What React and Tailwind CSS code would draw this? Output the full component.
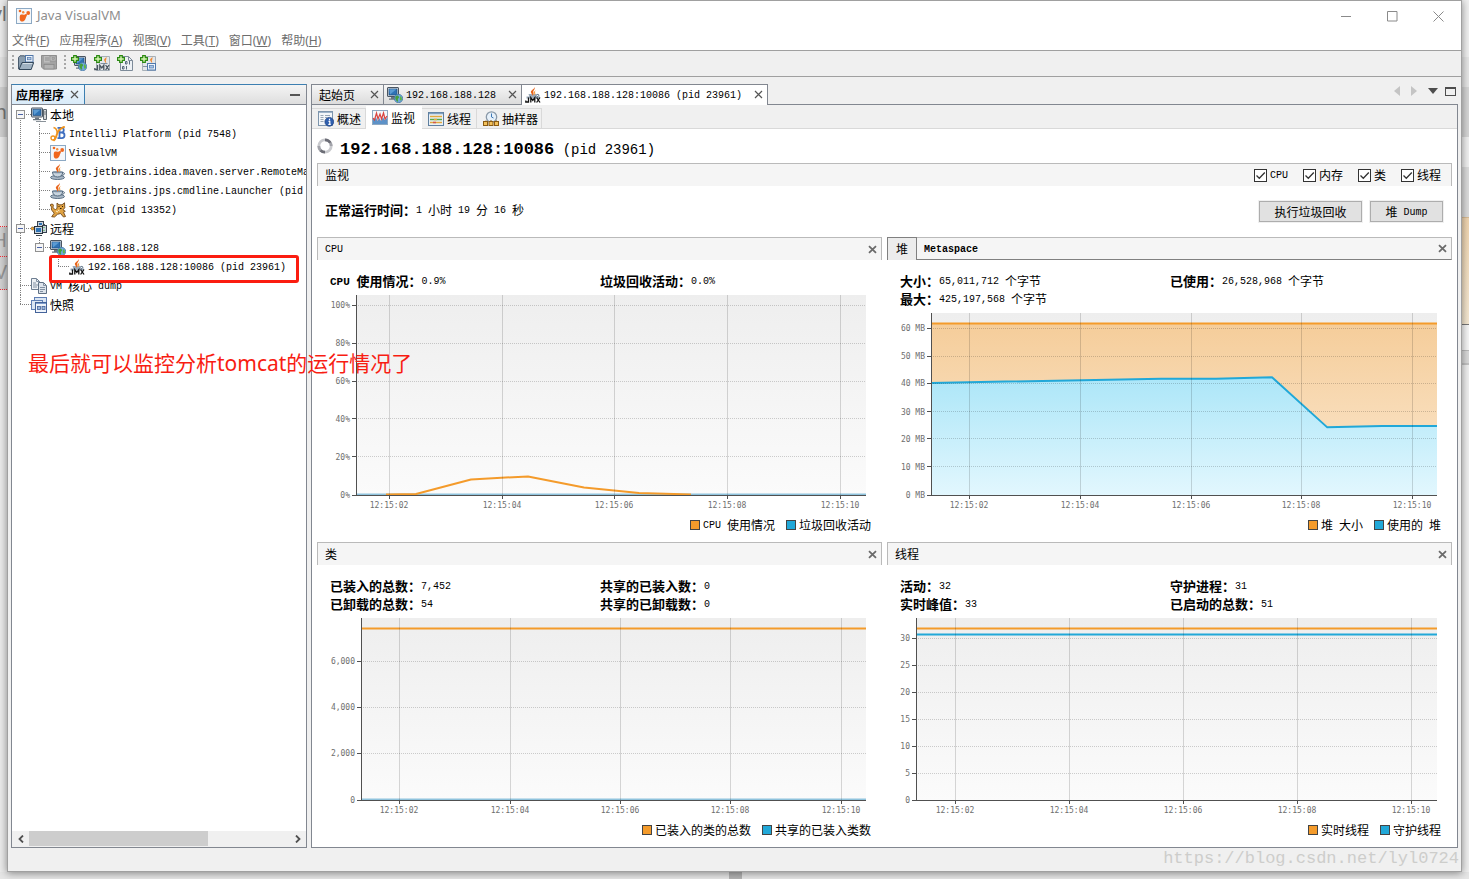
import React from "react";

const MONO = "font-['Liberation_Mono','Noto_Sans_CJK_SC',monospace]";
const SANS = "font-['Noto_Sans','Noto_Sans_CJK_SC',sans-serif]";

/* Latin runs use a smaller monospace size than the Chinese glyphs around them. */
function Mixed({ children, bold = false }) {
  const parts = String(children).match(/[\x00-\x7f]+|[^\x00-\x7f]+/g) || [];
  return (
    <span className={bold ? "inline-flex items-center align-middle leading-[14px] whitespace-pre font-bold" : "inline-flex items-center align-middle leading-[14px] whitespace-pre"}>
      {parts.map((p, i) =>
        p.charCodeAt(0) < 128 ? (
          <span key={i} className={bold ? "pt-[2px] text-[11px] leading-[12px]" : "pt-[2px] text-[10px] leading-[12px]"}>{p}</span>
        ) : (
          <span key={i} className={bold ? "font-['Noto_Sans_CJK_SC',sans-serif] text-[13px]" : "font-['Noto_Sans_CJK_SC',sans-serif] text-[12px]"}>{p}</span>
        )
      )}
    </span>
  );
}

/* ---------- icons ---------- */

function Svg({ children, size = "size-4" }) {
  return (
    <svg viewBox="0 0 16 16" className={`${size} shrink-0`} aria-hidden="true">
      {children}
    </svg>
  );
}

const VisualVmIcon = () => (
  <Svg>
    <rect x="0.5" y="0.5" width="15" height="15" fill="#f4f7fa" stroke="#8ca9c4" />
    <path d="M4.200 7c1.800-1 3 .2 4.800-.6 2.200-1.200 2.400.4 1.500 1.900-.9 1.500-.8 3.400-2.600 4.700-1.800 1.200-4 .4-4.100-1.500 0-1.300-.3-3.600.4-4.500z" fill="#f0671e" />
    <circle cx="4" cy="3" r="1.300" fill="#f0671e" />
    <circle cx="7.200" cy="4.300" r="1.200" fill="#f58a3c" />
    <circle cx="12.200" cy="5" r="1.900" fill="#f0671e" />
  </Svg>
);

const Monitor = ({ x = 0, y = 0 }) => (
  <g transform={`translate(${x} ${y})`}>
    <rect x="0.500" y="0.500" width="11" height="9" rx="0.500" fill="#c9d3dd" stroke="#4a5561" />
    <rect x="2" y="2" width="8" height="6" fill="#2f73b5" stroke="#1d4676" strokeWidth="0.600" />
    <path d="M2.300 2.300h7L3 7.500z" fill="#5b9bd3" />
    <path d="M4 10h4v1.500H4zM2 11.500h8v1.200H2z" fill="#6a7580" />
  </g>
);

const LocalIcon = () => (
  <Svg>
    <path d="M12.500 2.500h3v10h-3z" fill="#d6d9dc" stroke="#5c6670" />
    <path d="M13 5h2M13 7h2" stroke="#70787f" />
    <Monitor x={0} y={0.500} />
    <path d="M5 14.500h10" stroke="#8a9299" />
  </Svg>
);

const Globe = ({ cx = 11.500, cy = 11.500 }) => (
  <g>
    <circle cx={cx} cy={cy} r="4.200" fill="#6fa8dc" stroke="#3f719f" strokeWidth="0.700" />
    <path d={`M${cx - 3} ${cy - 2}c2-2 3-1 3.500.5.4 1.200-1.300 1-1.200 2.500.1 1 1 2-.2 2.200-1.700-.8-3-3.200-2.100-5.200z`} fill="#46a03c" />
    <path d={`M${cx + 1.500} ${cy - 2.500}c1.500.8 2.200 2 1.800 3.800-.8 1.600-2 .5-2-1z`} fill="#5cb548" />
  </g>
);

const HostIcon = () => (
  <Svg>
    <Monitor />
    <Globe />
  </Svg>
);

const RemoteIcon = () => (
  <Svg>
    <rect x="6.500" y="0.500" width="6" height="5" fill="#c9d3dd" stroke="#39434f" />
    <rect x="8" y="2" width="3" height="2" fill="#2f73b5" />
    <path d="M1 7h14M13.500 3v8" stroke="#55606a" />
    <circle cx="1.500" cy="7.500" r="1.500" fill="#f0a63a" stroke="#7a5215" strokeWidth="0.600" />
    <rect x="11.500" y="4.500" width="4" height="7" fill="#c9d3dd" stroke="#39434f" />
    <path d="M13 6v1M13 9v1" stroke="#3aa537" />
    <rect x="3.500" y="5.500" width="8" height="7" fill="#c9d3dd" stroke="#27313b" />
    <rect x="5" y="7" width="5" height="4" fill="#2f73b5" />
    <path d="M5 14.500h6" stroke="#39434f" />
  </Svg>
);

const IdeaIcon = () => (
  <Svg>
    <path d="M7.500 1.800h4c3 0 3 4.700 0 4.700H9.500h2.300c3.600 0 3.600 5.700 0 5.700H7.500M9.500 1.800v10.400" fill="none" stroke="#3f6fc0" strokeWidth="1.800" />
    <path d="M14.800.600C11 2 8 4.500 7 8c-.8 3-1.800 5.500-3.600 6.800" fill="none" stroke="#ef9420" strokeWidth="2" />
    <path d="M3.500 1.500c2 .5 3.600 2.300 3.800 5.500" fill="none" stroke="#ef9420" strokeWidth="1.600" />
    <circle cx="3" cy="12" r="2" fill="none" stroke="#ef9420" strokeWidth="1.400" />
  </Svg>
);

const Flame = ({ x = 0, y = 0 }) => (
  <g transform={`translate(${x} ${y})`}>
    <path d="M9.500-.200c.6 2.200-4.200 3.200-3.600 5.500.3 1.400 1.600 1.700 1.200 3.300 2-1.300 1.500-2.600 1.200-3.500C7.800 3.500 10.800 2.300 9.500-.200z" fill="#e8641b" />
    <path d="M10.800 3.200C9 4.100 8.600 5 9.200 6.200c.3.800-.2 1.600-.8 2.200 2.100-.8 2.200-1.900 1.700-2.800-.3-.8 0-1.500.7-2.400z" fill="#f39a3b" />
  </g>
);

const JavaIcon = () => (
  <Svg>
    <ellipse cx="7.500" cy="13.500" rx="7" ry="2" fill="#a9b8c6" stroke="#51677c" strokeWidth="0.900" />
    <path d="M2.500 8h10.200c-.2 3.300-1.900 5-5.100 5s-4.900-1.700-5.100-5z" fill="#c9d5df" stroke="#51677c" />
    <path d="M12.500 8.800c3-.6 2.500 2.500-1 2.700" fill="none" stroke="#51677c" />
    <ellipse cx="7.600" cy="8.300" rx="4.500" ry="1" fill="#7b8fa3" />
    <Flame y={-0.200} />
  </Svg>
);

const JmxGlyphs = ({ y = 0, color = "#111" }) => (
  <g transform={`translate(0 ${y})`} fill="none" stroke={color} strokeWidth="1.300">
    <path d="M3.500 0v4.500H.800V3M5.800 5V.200L7.800 3 9.800.200V5M11.600 0l3.400 5M15 0l-3.400 5" />
  </g>
);

const JmxIcon = () => (
  <Svg>
    <path d="M3.500 7h9l-1 3.500h-7zM1.500 9.500h13.500v2H1.500z" fill="#9aa9b8" />
    <path d="M12 7.500c3-.5 2 2 0 2.300" fill="none" stroke="#51677c" />
    <Flame />
    <JmxGlyphs y={10.500} />
  </Svg>
);

const TomcatIcon = () => (
  <Svg>
    <path d="M.500 2.500c2-1 3.500 0 2.700 1.800C2.500 6 4 7 5.500 7.500L7 6.500V1l2 1.800h3L14.500.800l.3 5-1.800 2 2.300 1.500-1.800 1 2 4.200-2 .5-3-3.500-3 .8-3 2.700-2.800-.3 2.500-3.500L2 8.500C.500 6.500 2.500 4 .500 4z" fill="#dfa243" stroke="#70471a" strokeWidth="0.900" />
    <path d="M8.500 4.500h1M12 4.500h1M10 6.500h1.500" stroke="#2c1c08" strokeWidth="1.200" />
    <path d="M6 9l2 1M8 8l1.500 1" stroke="#fff3cf" />
  </Svg>
);

const DumpIcon = () => (
  <Svg>
    <path d="M.500.500h5l3 3v8h-8z" fill="#edf1f5" stroke="#6f7f92" />
    <path d="M5.500.500v3h3M2 5h3M2 7h5M2 9h4" fill="none" stroke="#8291a3" />
    <path d="M7.500 4.500h5l3 3v8h-8z" fill="#dde4ec" stroke="#5f7084" />
    <path d="M12.500 4.500v3h3M9 9.500h5M9 11.500h5M9 13.500h3" fill="none" stroke="#8291a3" />
  </Svg>
);

const SnapshotIcon = () => (
  <Svg>
    <rect x="3.500" y="0.500" width="12" height="9" fill="#dbe6f3" stroke="#5f7fb5" />
    <rect x="0.500" y="3.500" width="11" height="9" fill="#dbe6f3" stroke="#5f7fb5" />
    <rect x="4.500" y="5.500" width="11" height="10" fill="#eef3fa" stroke="#44639a" />
    <path d="M5 6.500h10" stroke="#7d9ccb" />
    <rect x="6.500" y="9.500" width="3" height="3" fill="#9db7dc" stroke="#44639a" strokeWidth="0.800" />
    <rect x="11" y="9.500" width="3" height="3" fill="#9db7dc" stroke="#44639a" strokeWidth="0.800" />
  </Svg>
);

const OpenIcon = () => (
  <Svg>
    <path d="M.500 14V2.500L2 .800h4.500l1 1.700V6" fill="#8a9dae" stroke="#4a5c6e" />
    <rect x="7.500" y="0.500" width="7.500" height="6.500" fill="#eef4fb" stroke="#5076a8" />
    <rect x="9.500" y="2.500" width="3.500" height="2.300" fill="#b3cbe8" stroke="#5076a8" strokeWidth="0.700" />
    <path d="M1 14.500L4 7.500h11.700l-2.500 7z" fill="#9fb1c1" stroke="#33475a" />
    <path d="M5 8.500h9.200" stroke="#d5dfe7" />
  </Svg>
);

const SaveIcon = () => (
  <Svg>
    <path d="M.500.500h15v13.500H2.500l-2-2z" fill="#a3a3a3" stroke="#8f8f8f" />
    <rect x="3" y="1" width="6" height="6.500" fill="#bdbdbd" />
    <path d="M4 3h4M4 5h4" stroke="#929292" />
    <rect x="9" y="1" width="6" height="5" fill="#c4c4c4" stroke="#8f8f8f" strokeWidth="0.800" />
    <rect x="11" y="2.500" width="2.500" height="2" fill="#aaa" stroke="#8f8f8f" strokeWidth="0.600" />
    <rect x="3" y="9.500" width="10" height="4.500" fill="#b3b3b3" stroke="#8a8a8a" strokeWidth="0.800" />
  </Svg>
);

const Plus = () => (
  <path d="M2.700.600h2.600v2.100h2.100v2.600H5.300v2.100H2.700V5.300H.600V2.700h2.100z" fill="#d9f7b5" stroke="#2b8a12" strokeWidth="1.200" />
);

const AddHostIcon = () => (
  <Svg>
    <Monitor x={3} y={1} />
    <Globe cx={11.600} cy={11.600} />
    <Plus />
  </Svg>
);

const AddJmxIcon = () => (
  <Svg>
    <path d="M2.500 1.500h13v14h-13z" fill="#e3e7eb" stroke="#a7b0b8" />
    <path d="M12.500 1c0 2.500-3.500 2.500-2 5L12 8.500c.8-1.700-1-2.400.3-4z" fill="#f08a34" />
    <path d="M6.500 8.500h7" stroke="#8391a0" />
    <JmxGlyphs y={10} color="#4b5661" />
    <Plus />
  </Svg>
);

const AddCoreIcon = () => (
  <Svg>
    <path d="M3.500 1.500h8l4 4v10h-12z" fill="#edf1f5" stroke="#7d8b99" />
    <path d="M11.500 1.500v4h4" fill="none" stroke="#7d8b99" />
    <path d="M8.500 6.500H10v2.500H8.500zM12.500 6v3.500M5.500 11.500H7V14H5.500zM9.500 11v3.500" fill="none" stroke="#55687c" />
    <Plus />
  </Svg>
);

const AddSnapIcon = () => (
  <Svg>
    <path d="M2.500 1.500h13v14h-13z" fill="#e3e7eb" stroke="#a7b0b8" />
    <path d="M12.500 1c0 2.500-3.500 2.500-2 5L12 8c.8-1.700-1-2 .3-3.500z" fill="#f08a34" />
    <path d="M3 11.500h4" stroke="#8391a0" />
    <rect x="7.500" y="8.500" width="8" height="6.500" fill="#eef4fb" stroke="#4f78ad" />
    <rect x="9.500" y="10.500" width="4" height="2.500" fill="#a8c4e6" stroke="#4f78ad" strokeWidth="0.700" />
    <Plus />
  </Svg>
);

const OverviewIcon = () => (
  <Svg>
    <rect x="0.500" y="0.500" width="14" height="14" fill="#f3f6f9" stroke="#7d95ad" />
    <path d="M1 1.500h13" stroke="#9fb5ca" />
    <path d="M2.500 4.500h3M2.500 6.500h3M2.500 8.500h3M2.500 10.500h3M7 4.500h5M7 6.500h2" stroke="#97a6b5" />
    <circle cx="11.300" cy="10.800" r="4.400" fill="#2f5fae" stroke="#1e3f7c" strokeWidth="0.700" />
    <path d="M11.500 7.800v1.400M10.500 10.300h1.300v3M10.300 13.300h2.500" stroke="#fff" strokeWidth="1.200" fill="none" />
  </Svg>
);

const MonitorTabIcon = () => (
  <Svg>
    <rect x="0.500" y="0.500" width="15" height="14" fill="#f4f8fb" stroke="#8fa9c2" />
    <path d="M1 14V8l1.500 2L4 7l1.500 4 2-3 1.500 3 2-4 1.500 3L15 8v6z" fill="#5d92c8" />
    <path d="M1 8l1.500 2L4.500 3 6 9l2-5 1.500 5 2-6 1.500 6L15 6" fill="none" stroke="#d9443f" strokeWidth="1.200" />
  </Svg>
);

const ThreadsTabIcon = () => (
  <Svg>
    <rect x="0.500" y="1.500" width="15" height="13" fill="#e9f1f8" stroke="#5f7f9f" />
    <path d="M1 2.500h14" stroke="#7fa0c0" strokeWidth="1.500" />
    <path d="M2 5.500h12" stroke="#e3a83c" strokeWidth="1.500" />
    <path d="M2 8.500h12" stroke="#58a84f" strokeWidth="1.500" />
    <path d="M6 8.500h3" stroke="#e3a83c" strokeWidth="1.500" />
    <path d="M2 11.500h12" stroke="#e3a83c" strokeWidth="1.500" />
    <path d="M5 11.500h3" stroke="#d2584c" strokeWidth="1.500" />
  </Svg>
);

const SamplerIcon = () => (
  <Svg>
    <circle cx="8.500" cy="6" r="5.200" fill="#e6f0f9" stroke="#8a99a8" strokeWidth="1.300" />
    <path d="M8.500 2.500V6l2 1" fill="none" stroke="#3f78b5" />
    <path d="M3 11.500V9.500M8 11v-2M13.500 11V9.500" stroke="#7b5513" />
    <g fill="#f3c15a" stroke="#8a5b12">
      <rect x="0.500" y="10.500" width="4" height="4" />
      <rect x="6" y="10.500" width="4" height="4" />
      <rect x="11.500" y="10.500" width="4" height="4" />
    </g>
  </Svg>
);

const Spinner = () => (
  <Svg>
    <circle cx="8" cy="8" r="6.200" fill="none" stroke="#c9cace" strokeWidth="2.800" />
    <path d="M8 1.800a6.200 6.200 0 0 1 5.400 3.100M8 14.200a6.200 6.200 0 0 1-4.600-2" fill="none" stroke="#6c6d76" strokeWidth="2.800" />
    <path d="M13.400 4.900a6.200 6.200 0 0 1 .8 3.100M3.400 12.200A6.200 6.200 0 0 1 1.800 8" fill="none" stroke="#a2a3aa" strokeWidth="2.800" />
  </Svg>
);

const TabX = ({ label }) => (
  <button type="button" aria-label={label} className="flex size-[9px] shrink-0 items-center justify-center">
    <svg viewBox="0 0 9 9" className="size-[9px]" aria-hidden="true">
      <path d="M1 1l7 7M8 1L1 8" stroke="#555" strokeWidth="1.200" />
    </svg>
  </button>
);

const CardX = ({ label }) => (
  <button type="button" aria-label={label} className="ml-auto flex size-[9px] shrink-0 items-center justify-center">
    <svg viewBox="0 0 9 9" className="size-[9px]" aria-hidden="true">
      <path d="M1 1.200l7 6.600M8 1.200L1 7.800" stroke="#6a6a6a" strokeWidth="1.800" />
    </svg>
  </button>
);

/* ---------- tree ---------- */

function Guide({ kind, box }) {
  return (
    <svg viewBox="0 0 19 19" className="size-[19px] shrink-0" aria-hidden="true" shapeRendering="crispEdges">
      <g stroke="#808080" strokeDasharray="1 1" fill="none">
        {(kind === "tee" || kind === "line" || kind === "end") && (
          <path d={kind === "end" ? "M8.500 0V10" : "M8.500 0V19"} />
        )}
        {kind === "start" && <path d="M8.500 9V19" />}
        {kind !== "line" && kind !== "none" && <path d="M8 9.500H19" />}
      </g>
      {box && (
        <g>
          <rect x="4.500" y="5.500" width="8" height="8" fill="#f6f6f6" stroke="#919191" />
          <path d="M6 9.500h5" stroke="#4b63a7" />
        </g>
      )}
    </svg>
  );
}

const TREE = [
  { g: [["start", true]], icon: <LocalIcon />, text: "本地" },
  { g: [["line"], ["tee"]], icon: <IdeaIcon />, text: "IntelliJ Platform (pid 7548)" },
  { g: [["line"], ["tee"]], icon: <VisualVmIcon />, text: "VisualVM" },
  { g: [["line"], ["tee"]], icon: <JavaIcon />, text: "org.jetbrains.idea.maven.server.RemoteMa" },
  { g: [["line"], ["tee"]], icon: <JavaIcon />, text: "org.jetbrains.jps.cmdline.Launcher (pid" },
  { g: [["line"], ["end"]], icon: <TomcatIcon />, text: "Tomcat (pid 13352)" },
  { g: [["tee", true]], icon: <RemoteIcon />, text: "远程" },
  { g: [["line"], ["end", true]], icon: <HostIcon />, text: "192.168.188.128" },
  { g: [["line"], ["none"], ["end"]], icon: <JmxIcon />, text: "192.168.188.128:10086 (pid 23961)" },
  { g: [["tee"]], icon: <DumpIcon />, text: "VM 核心 dump" },
  { g: [["end"]], icon: <SnapshotIcon />, text: "快照" },
];

function Sidebar() {
  return (
    <aside className="flex w-[296px] shrink-0 flex-col border border-[#828790] border-t-[#3c7fb1] bg-white">
      <div className="flex h-5 items-stretch border-b border-[#828790] bg-gradient-to-b from-[#f4f4f4] to-[#dedede]">
        <div className="flex w-[73px] items-center justify-between border-r border-[#3c7fb1] bg-gradient-to-b from-[#eff7fd] to-[#d9ebf9] pr-[5px] pl-1">
          <span className="font-['Noto_Sans_CJK_SC',sans-serif] text-[12px] leading-[14px] font-bold">应用程序</span>
          <TabX label="关闭应用程序" />
        </div>
        <button type="button" aria-label="最小化" className="mr-[6px] ml-auto flex items-center">
          <span className="h-[2px] w-[10px] bg-[#555]" />
        </button>
      </div>
      <ul className="relative flex flex-1 flex-col overflow-hidden">
        {TREE.map((n) => (
          <li key={n.text} className="flex h-[19px] items-center">
            {n.g.map(([kind, box], i) => (
              <Guide key={i} kind={kind} box={box} />
            ))}
            {n.icon}
            <span className="ml-[3px] flex items-center"><Mixed>{n.text}</Mixed></span>
          </li>
        ))}
        <li aria-hidden="true" className="absolute top-[150px] left-[37px] h-[28px] w-[250px] rounded-[3px] border-[3px] border-[#fb1d10]" />
      </ul>
      <div className="flex h-4 items-center bg-[#f0f0f0]">
        <button type="button" aria-label="向左滚动" className="flex w-[17px] justify-center">
          <svg viewBox="0 0 8 8" className="size-2" aria-hidden="true"><path d="M6 .500L2.500 4 6 7.500" fill="none" stroke="#505050" strokeWidth="1.800" /></svg>
        </button>
        <div className="flex h-full flex-1">
          <div className="mb-px w-[69%] bg-[#cdcdcd]" />
        </div>
        <button type="button" aria-label="向右滚动" className="flex w-[17px] justify-center">
          <svg viewBox="0 0 8 8" className="size-2" aria-hidden="true"><path d="M2 .500L5.500 4 2 7.500" fill="none" stroke="#505050" strokeWidth="1.800" /></svg>
        </button>
      </div>
    </aside>
  );
}

/* ---------- charts ---------- */

const pct = (v, total) => `${(v / total) * 100}%`;

function Chart({ id, w, h, xs, ys, areas = [], lines }) {
  return (
    <svg className="block min-h-[100px] w-full flex-1 overflow-visible" role="img" aria-label={id}>
      <defs>
        <linearGradient id={`${id}-bg`} x1="0" y1="0" x2="0" y2="1">
          <stop offset="0" stopColor="#eeeeee" /><stop offset="1" stopColor="#fbfbfb" />
        </linearGradient>
        <linearGradient id={`${id}-orange`} x1="0" y1="0" x2="0" y2="1">
          <stop offset="0" stopColor="#f5cd9a" /><stop offset="1" stopColor="#fbe8d0" />
        </linearGradient>
        <linearGradient id={`${id}-blue`} x1="0" y1="0" x2="0" y2="1">
          <stop offset="0" stopColor="#ace6f8" /><stop offset="1" stopColor="#e2f7fe" />
        </linearGradient>
      </defs>
      <rect width="100%" height="100%" fill={`url(#${id}-bg)`} />
      <svg width="100%" height="100%" viewBox={`0 0 ${w} ${h}`} preserveAspectRatio="none">
        {areas.map((a) => (
          <polygon key={a.fill} points={`0,${h} ${a.points} ${w},${h}`} fill={`url(#${id}-${a.fill})`} />
        ))}
        {lines.map((l) => (
          <polyline key={l.color} points={l.points} fill="none" stroke={l.color} strokeWidth="2" vectorEffect="non-scaling-stroke" strokeLinejoin="round" />
        ))}
      </svg>
      <g shapeRendering="crispEdges">
        {ys.map(([y, label]) => (
          <g key={label}>
            <line x1="0" x2="100%" y1={pct(y, h)} y2={pct(y, h)} stroke="#000" strokeOpacity="0.180" strokeDasharray="1 1" />
            <line x1="-4" x2="0" y1={pct(y, h)} y2={pct(y, h)} stroke="#505050" />
          </g>
        ))}
        {xs.map(([x, label]) => (
          <g key={label}>
            <line x1={pct(x, w)} x2={pct(x, w)} y1="0" y2="100%" stroke="#000" strokeOpacity="0.150" />
            <svg x={pct(x, w)} y="100%" overflow="visible"><line x1="0" x2="0" y1="0" y2="4" stroke="#505050" /></svg>
          </g>
        ))}
        <line x1="0" x2="0" y1="0" y2="100%" stroke="#505050" />
        <line x1="0" x2="100%" y1="100%" y2="100%" stroke="#505050" />
      </g>
      <g className="fill-[#6e6e6e] font-['DejaVu_Sans_Mono',monospace] text-[8px]">
        {ys.map(([y, label]) => (
          <text key={label} x="-6" y={pct(y, h)} dy="3" textAnchor="end" className="whitespace-pre">{label}</text>
        ))}
        {xs.map(([x, label]) => (
          <text key={label} x={pct(x, w)} y="100%" dy="13" textAnchor="middle">{label}</text>
        ))}
      </g>
    </svg>
  );
}

const TIMES = ["12:15:02", "12:15:04", "12:15:06", "12:15:08", "12:15:10"];
const atTimes = (xs) => xs.map((x, i) => [x, TIMES[i]]);
const ORANGE = "#f49b2b";
const BLUE = "#21a8d8";

const CHARTS = {
  cpu: {
    w: 510, h: 199, xs: atTimes([33, 146, 258, 371, 484]),
    ys: [[10, "100%"], [48, "80%"], [86, "60%"], [123, "40%"], [161, "20%"], [199, "0%"]],
    lines: [
      { color: "#8fc3dd", points: "0,198.500 510,198.500" },
      { color: ORANGE, points: "30,198.500 60,198 115,183.500 172,180.500 228,191.500 283,197 335,198.500" },
    ],
  },
  heap: {
    w: 506, h: 181, xs: atTimes([38, 149, 260, 370, 481]),
    ys: [[15, "60 MB"], [43, "50 MB"], [70, "40 MB"], [98, "30 MB"], [125, "20 MB"], [153, "10 MB"], [181, "0 MB"]],
    areas: [
      { fill: "orange", points: "0,10.500 506,10.500" },
      { fill: "blue", points: "0,69.500 230,65.500 285,65.500 341,64 396,113.500 451,112.500 506,112.500" },
    ],
    lines: [
      { color: ORANGE, points: "0,10.500 506,10.500" },
      { color: BLUE, points: "0,69.500 230,65.500 285,65.500 341,64 396,113.500 451,112.500 506,112.500" },
    ],
  },
  classes: {
    w: 505, h: 182, xs: atTimes([38, 149, 259, 369, 480]),
    ys: [[43, "6,000"], [89, "4,000"], [135, "2,000"], [182, "0"]],
    lines: [
      { color: "#8fc3dd", points: "0,181.500 505,181.500" },
      { color: ORANGE, points: "0,10.500 505,10.500" },
    ],
  },
  threads: {
    w: 521, h: 182, xs: atTimes([39, 153, 267, 381, 495]),
    ys: [[20, "30"], [47, "25"], [74, "20"], [101, "15"], [128, "10"], [155, "5"], [182, "0"]],
    lines: [
      { color: ORANGE, points: "0,10.500 521,10.500" },
      { color: BLUE, points: "0,16.500 521,16.500" },
    ],
  },
};

function Stat({ name, value }) {
  return (
    <div className="flex h-[18px] items-center whitespace-nowrap">
      <Mixed bold>{name}</Mixed>
      <Mixed>{value}</Mixed>
    </div>
  );
}

function Card({ header, stats, chart, chartPad, legend }) {
  return (
    <section className="flex min-w-0 flex-col">
      {header}
      <div className="mt-3 mb-[5px] grid grid-cols-2 pr-3 pl-[13px]">
        {stats.map(([name, value]) => <Stat key={name} name={name} value={value} />)}
      </div>
      <div className={`flex min-h-0 flex-1 flex-col ${chartPad}`}>
        <Chart id={chart} {...CHARTS[chart]} />
      </div>
      <div className="mt-[21px] mb-[8px] flex h-[18px] items-center justify-end gap-[11px] pr-[11px]">
        {legend.map((t, i) => (
          <div key={t} className="flex items-center gap-[3px]">
            <span className={`size-[10px] border border-[#444] ${i === 0 ? "bg-[#f49b2b]" : "bg-[#21a8d8]"}`} />
            <Mixed>{t}</Mixed>
          </div>
        ))}
      </div>
    </section>
  );
}

const PlainHeader = ({ title }) => (
  <header className="flex h-[23px] shrink-0 items-center border border-b-0 border-[#bababa] bg-[#f5f5f5] pr-1 pl-[7px]">
    <h2 className="flex items-center"><Mixed>{title}</Mixed></h2>
    <CardX label={`关闭${title}`} />
  </header>
);

const HeapHeader = () => (
  <header className="flex h-[23px] shrink-0 items-stretch">
    <button type="button" className="flex w-[30px] items-center justify-center border border-b-0 border-[#808080] bg-[#ececec]"><Mixed>堆</Mixed></button>
    <div className="flex flex-1 items-center border border-l-0 border-[#bababa] border-b-[#808080] bg-[#f5f5f5] pr-1 pl-[7px]">
      <button type="button" className="pt-[2px] text-[10px] leading-[12px] font-bold">Metaspace</button>
      <CardX label="关闭堆" />
    </div>
  </header>
);

function Check({ label }) {
  return (
    <label className="flex items-center gap-[3px]">
      <span className="grid size-[13px] place-items-center">
        <input type="checkbox" defaultChecked className="peer col-start-1 row-start-1 size-[13px] appearance-none border border-[#333] bg-white" />
        <svg viewBox="0 0 13 13" className="pointer-events-none invisible col-start-1 row-start-1 size-[13px] peer-checked:visible" aria-hidden="true">
          <path d="M2.500 6.500l2.800 2.800L10.800 3.500" fill="none" stroke="#333" strokeWidth="1.300" />
        </svg>
      </span>
      <Mixed>{label}</Mixed>
    </label>
  );
}

const WinButton = ({ children, width }) => (
  <button type="button" className={`flex h-[21px] items-center justify-center border border-[#adadad] bg-[#e1e1e1] outline outline-[#f0f0f0] ${width}`}>
    <Mixed>{children}</Mixed>
  </button>
);

const DocTab = ({ icon, text, width, active }) => (
  <div className={`flex items-center border-t border-r border-[#828790] pr-1 ${width} ${active ? "h-[21px] bg-white pb-px pl-[3px]" : "h-5 bg-gradient-to-b from-[#f6f6f6] to-[#dcdcdc] pl-[3px]"}`}>
    {icon}
    <span className={icon ? "mr-auto ml-[3px] flex items-center" : "mr-auto ml-1 flex items-center"}><Mixed>{text}</Mixed></span>
    <TabX label={`关闭 ${text}`} />
  </div>
);

const SubTab = ({ icon, text, width, active }) => (
  <button type="button" className={`flex items-center gap-[3px] pl-[6px] ${width} ${active ? "-mb-px h-[23px] bg-white" : "h-5 border-t border-r border-[#d9d9d9] bg-[#f0f0f0] pt-px"}`}>
    {icon}
    <Mixed>{text}</Mixed>
  </button>
);

function Main() {
  return (
    <main className="flex min-w-0 flex-1 flex-col">
      <div className="z-10 -mb-px flex h-[21px] items-start">
        <div className="flex border-l border-[#828790]">
          <DocTab text="起始页" width="w-[72px]" />
          <DocTab icon={<HostIcon />} text="192.168.188.128" width="w-[138px]" />
          <DocTab icon={<JmxIcon />} text="192.168.188.128:10086 (pid 23961)" width="w-[246px]" active />
        </div>
        <div className="mt-[2px] mr-[2px] ml-auto flex items-center gap-[11px]">
          <button type="button" aria-label="上一个"><svg viewBox="0 0 6 10" className="h-[10px] w-[6px]"><path d="M6 0v10L0 5z" fill="#c4c4c4" /></svg></button>
          <button type="button" aria-label="下一个"><svg viewBox="0 0 6 10" className="h-[10px] w-[6px]"><path d="M0 0v10l6-5z" fill="#c4c4c4" /></svg></button>
          <button type="button" aria-label="文档列表"><svg viewBox="0 0 10 6" className="h-[6px] w-[10px]"><path d="M0 0h10L5 6z" fill="#4d4d4d" /></svg></button>
          <button type="button" aria-label="最大化文档" className="-ml-1 h-[9px] w-[11px] border border-t-2 border-[#4d4d4d]" />
        </div>
      </div>
      <div className="flex flex-1 flex-col border border-[#828790] bg-white">
        <nav className="flex h-6 items-end border-b border-[#d9d9d9] bg-[#f0f0f0]">
          <SubTab icon={<OverviewIcon />} text="概述" width="w-[54px]" />
          <SubTab icon={<MonitorTabIcon />} text="监视" width="w-[56px]" active />
          <SubTab icon={<ThreadsTabIcon />} text="线程" width="w-[55px]" />
          <SubTab icon={<SamplerIcon />} text="抽样器" width="w-[65px]" />
        </nav>
        <div className="flex flex-1 flex-col px-[5px]">
          <div className="flex h-[34px] items-center">
            <Spinner />
            <h1 className="ml-[7px] pt-2 text-[14px] leading-[26px] whitespace-pre">
              <span className="text-[17px] font-bold">192.168.188.128:10086</span> (pid 23961)
            </h1>
          </div>
          <div className="flex h-[23px] items-center border border-b-0 border-[#bababa] bg-[#f5f5f5] pr-[10px] pl-[7px]">
            <h2 className="flex items-center"><Mixed>监视</Mixed></h2>
            <div className="ml-auto flex gap-[15px]">
              <Check label="CPU" />
              <Check label="内存" />
              <Check label="类" />
              <Check label="线程" />
            </div>
          </div>
          <div className="flex h-[51px] items-center gap-2 pr-[9px] pl-2">
            <div className="mr-auto flex items-center pb-1">
              <Mixed bold>正常运行时间：</Mixed>
              <Mixed>1 小时 19 分 16 秒</Mixed>
            </div>
            <WinButton width="w-[103px]">执行垃圾回收</WinButton>
            <WinButton width="w-[73px]">堆 Dump</WinButton>
          </div>
          <div className="grid flex-1 auto-rows-fr grid-cols-2 gap-x-[5px]">
            <Card
              header={<PlainHeader title="CPU" />}
              stats={[["CPU 使用情况：", "0.9%"], ["垃圾回收活动：", "0.0%"]]}
              chart="cpu" chartPad="pl-[39px] pr-[16px]"
              legend={["CPU 使用情况", "垃圾回收活动"]}
            />
            <Card
              header={<HeapHeader />}
              stats={[["大小：", "65,011,712 个字节"], ["已使用：", "26,528,968 个字节"], ["最大：", "425,197,568 个字节"]]}
              chart="heap" chartPad="pl-[44px] pr-[15px]"
              legend={["堆 大小", "使用的 堆"]}
            />
            <Card
              header={<PlainHeader title="类" />}
              stats={[["已装入的总数：", "7,452"], ["共享的已装入数：", "0"], ["已卸载的总数：", "54"], ["共享的已卸载数：", "0"]]}
              chart="classes" chartPad="pl-[44px] pr-[16px]"
              legend={["已装入的类的总数", "共享的已装入类数"]}
            />
            <Card
              header={<PlainHeader title="线程" />}
              stats={[["活动：", "32"], ["守护进程：", "31"], ["实时峰值：", "33"], ["已启动的总数：", "51"]]}
              chart="threads" chartPad="pl-[29px] pr-[15px]"
              legend={["实时线程", "守护线程"]}
            />
          </div>
        </div>
      </div>
    </main>
  );
}

/* ---------- window frame ---------- */

const MENUS = [["文件", "F"], ["应用程序", "A"], ["视图", "V"], ["工具", "T"], ["窗口", "W"], ["帮助", "H"]];

const Grip = () => (
  <svg viewBox="0 0 2 16" className="h-4 w-[2px]" aria-hidden="true">
    <path d="M1 0v16" stroke="#a8a8a8" strokeWidth="2" strokeDasharray="2 2" />
  </svg>
);

const ToolButton = ({ label, children, disabled }) => (
  <button type="button" aria-label={label} disabled={disabled}>{children}</button>
);

export default function App() {
  return (
    <div className={`flex min-h-screen flex-col overflow-hidden bg-[#ebebeb] text-black ${MONO}`}>
      <div className="flex flex-1">
        <div className={`flex w-[7px] shrink-0 flex-col items-end overflow-hidden text-[20px] text-[#777] ${SANS}`}>
          <div className="h-[57px] leading-[28px]">yl</div>
          <div className="h-[30px] w-full bg-[#e2e2e2]" />
          <div className="flex h-[50px] w-full justify-end bg-[#cfcfcf] leading-[50px]">m</div>
          <div className="h-[80px]" />
          <div className="h-[10px] w-full border-b border-dotted border-red-500" />
          <div className="flex h-[30px] w-full justify-end border-b border-dotted border-red-500 bg-[#d2d2d2] leading-[26px] text-[#999]">H</div>
          <div className="flex h-[33px] w-full justify-end border-b border-dotted border-red-500 bg-[#d2d2d2] leading-[30px] text-[#999]">V</div>
        </div>

        <div className="z-10 flex min-w-0 flex-1 flex-col border border-[#a0a0a0] bg-[#f0f0f0] shadow-[0_1px_8px_rgba(0,0,0,0.45)]">
          <div className="bg-white">
            <div className={`flex h-[30px] items-center pl-2 text-[13px] text-[#8e8e8e] ${SANS}`}>
              <VisualVmIcon />
              <span className="ml-[5px]">Java VisualVM</span>
              <div className="mr-[17px] ml-auto flex items-center gap-[35px]">
                <button type="button" aria-label="最小化窗口"><svg viewBox="0 0 11 11" className="size-[11px]"><path d="M0 5.500h10" stroke="#8a8a8a" /></svg></button>
                <button type="button" aria-label="最大化窗口"><svg viewBox="0 0 11 11" className="size-[11px]"><path d="M.500.500h9.500v9.500H.500z" fill="none" stroke="#8a8a8a" /></svg></button>
                <button type="button" aria-label="关闭窗口"><svg viewBox="0 0 11 11" className="size-[11px]"><path d="M.500.500l10 10M10.500.500l-10 10" stroke="#8a8a8a" /></svg></button>
              </div>
            </div>
            <nav className={`flex h-5 items-center gap-[10px] border-b border-[#a0a0a0] pl-1 text-[12px] text-[#6d6d6d] ${SANS}`}>
              {MENUS.map(([t, k]) => (
                <button key={t} type="button" className="leading-[19px] whitespace-nowrap">{t}(<u>{k}</u>)</button>
              ))}
            </nav>
          </div>

          <div className="flex h-[26px] items-center border-b border-[#a0a0a0] pb-[2px] pl-1">
            <Grip />
            <div className="mr-[7px] ml-1 flex gap-[7px]">
              <ToolButton label="装入"><OpenIcon /></ToolButton>
              <ToolButton label="保存" disabled><SaveIcon /></ToolButton>
            </div>
            <Grip />
            <div className="ml-[5px] flex gap-[7px]">
              <ToolButton label="添加远程主机"><AddHostIcon /></ToolButton>
              <ToolButton label="添加 JMX 连接"><AddJmxIcon /></ToolButton>
              <ToolButton label="添加 VM 核心 dump"><AddCoreIcon /></ToolButton>
              <ToolButton label="添加快照"><AddSnapIcon /></ToolButton>
            </div>
          </div>

          <div className="flex flex-1 gap-1 px-[3px] pt-[7px] pb-[23px]">
            <Sidebar />
            <Main />
          </div>
        </div>

        <div className="flex w-[7px] shrink-0 flex-col bg-[#f0f0f0]">
          <div className="h-[57px]" />
          <div className="h-[30px] bg-[#e6e6e6]" />
          <div className="h-[50px] bg-[#d6d6d6]" />
          <div className="h-[30px]" />
          <div className="h-[50px] bg-[#dcdcdc]" />
          <div className="h-[108px] border-t border-b border-t-[#d9bc94] border-b-[#777] bg-gradient-to-b from-[#f0d5b0] to-[#f5e8d2]" />
          <div className="h-[26px] border-b border-[#bbb] bg-[#f6f6f6]" />
          <div className="h-[14px] border-b-2 border-[#c4c4c4] bg-[#dadada]" />
        </div>
      </div>
      <div className="flex h-[7px] bg-[#e6e6e6]">
        <div className="ml-[49.6%] w-[13px] bg-[#b3b3b3]" />
      </div>

      <p className={`absolute top-[349px] left-[28px] z-20 text-[21px] leading-[28px] whitespace-nowrap text-[#f81d12] ${SANS}`}>
        最后就可以监控分析tomcat的运行情况了
      </p>
      <p className="absolute right-[10px] bottom-[9px] z-20 text-[17px] leading-[22px] text-[#cdcdcb]">https://blog.csdn.net/lyl0724</p>
    </div>
  );
}
